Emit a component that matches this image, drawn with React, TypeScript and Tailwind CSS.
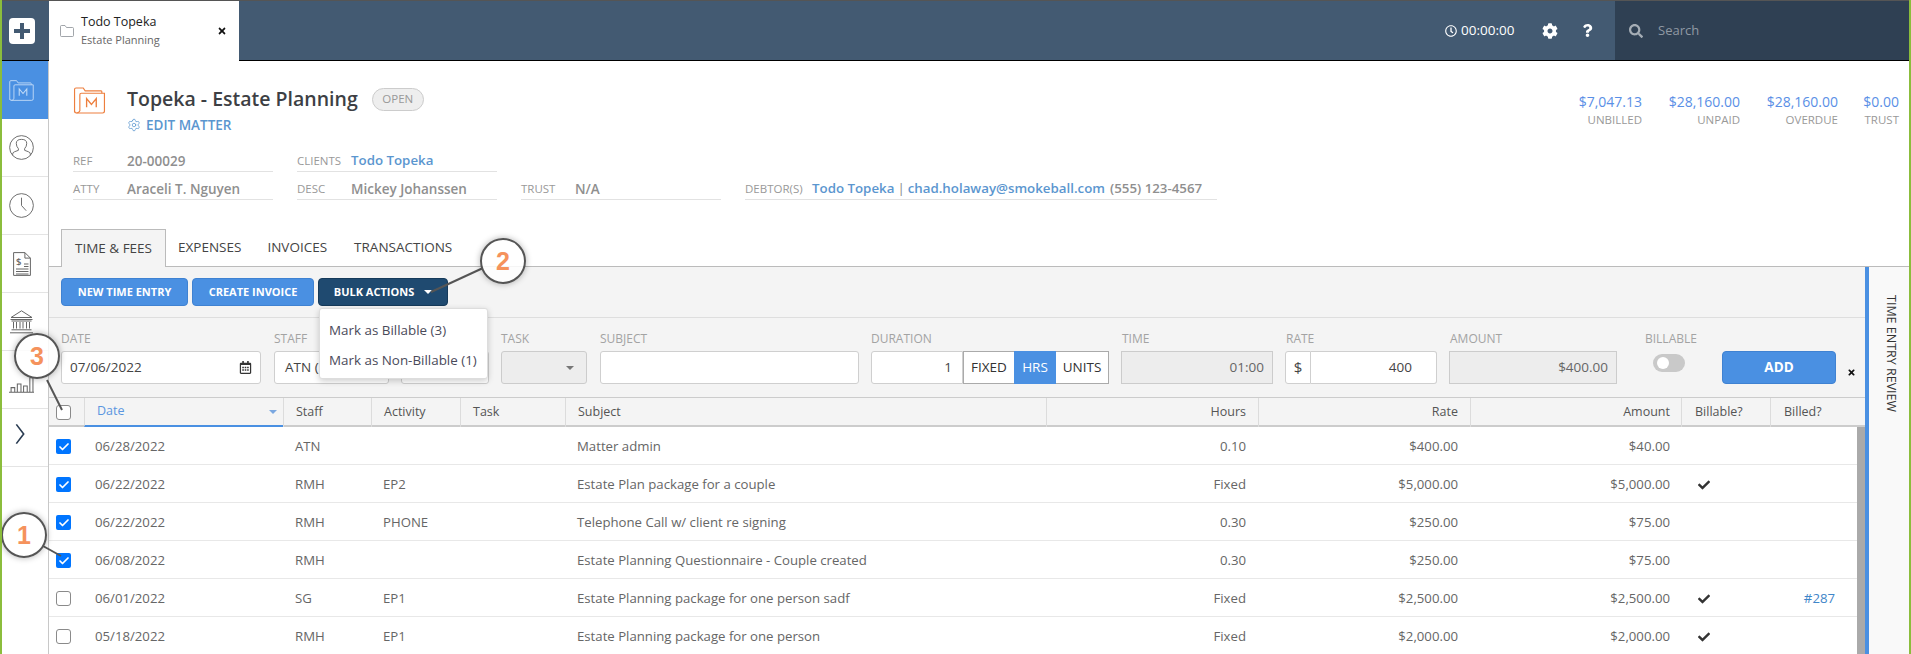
import { Check, Settings } from "lucide-react";
import { FaCog, FaQuestion, FaSearch, FaCheck, FaRegClock, FaTimes, FaRegCalendarAlt } from "react-icons/fa";

const font = "font-['Open_Sans',sans-serif]";

const rows = [
  { on: true, date: "06/28/2022", staff: "ATN", act: "", subject: "Matter admin", hours: "0.10", rate: "$400.00", amount: "$40.00", billable: false, billed: "" },
  { on: true, date: "06/22/2022", staff: "RMH", act: "EP2", subject: "Estate Plan package for a couple", hours: "Fixed", rate: "$5,000.00", amount: "$5,000.00", billable: true, billed: "" },
  { on: true, date: "06/22/2022", staff: "RMH", act: "PHONE", subject: "Telephone Call w/ client re signing", hours: "0.30", rate: "$250.00", amount: "$75.00", billable: false, billed: "" },
  { on: true, date: "06/08/2022", staff: "RMH", act: "", subject: "Estate Planning Questionnaire - Couple created", hours: "0.30", rate: "$250.00", amount: "$75.00", billable: false, billed: "" },
  { on: false, date: "06/01/2022", staff: "SG", act: "EP1", subject: "Estate Planning package for one person sadf", hours: "Fixed", rate: "$2,500.00", amount: "$2,500.00", billable: true, billed: "#287" },
  { on: false, date: "05/18/2022", staff: "RMH", act: "EP1", subject: "Estate Planning package for one person", hours: "Fixed", rate: "$2,000.00", amount: "$2,000.00", billable: true, billed: "" },
];

function MatterIcon({ className }: { className: string }) {
  return (
    <svg viewBox="0 0 33 28" fill="none" stroke="currentColor" strokeWidth="1.2" className={className}>
      <path d="M1 26V2.500Q1 1 2.500 1H10l2 3h16.500q.8 0 .8 1v1.500" />
      <path d="M3 27h27q2 0 2-2V6.500H8q-1.500 0-1.500 1.500v17" />
      <path d="M1 25q0 2 2 2t3.500-2" />
      <path d="M13.500 21v-9l5 6 5-6v9" strokeWidth="1.4" />
    </svg>
  );
}

function SideCell({ active, children }: { active?: boolean; children: React.ReactNode }) {
  return (
    <div className={`h-[58px] flex items-center justify-center pr-[7px] border-b border-[#e4e4e4] ${active ? "bg-[#4a90e2] border-b-0 h-[57px]" : ""}`}>
      {children}
    </div>
  );
}

function Sidebar() {
  return (
    <div className="w-[47px] shrink-0 bg-white border-r border-[#c8c8c8] flex flex-col text-[#666]">
      <SideCell active>
        <MatterIcon className="w-[25px] h-[23px] text-[#c3dcf7]" />
      </SideCell>
      <SideCell>
        <svg viewBox="0 0 24 24" fill="none" stroke="currentColor" strokeWidth="0.9" className="w-[25px] h-[25px]">
          <circle cx="12" cy="12" r="11.400" />
          <path d="M3.500 19.500v-1.200q0-1.600 1.800-2.200l3.700-1.400v-1.600q-2-2-2-5.100 0-3.800 5-3.800t5 3.800q0 3.100-2 5.100v1.600l3.700 1.400q1.800.6 1.800 2.200v1.200" />
        </svg>
      </SideCell>
      <SideCell>
        <svg viewBox="0 0 24 24" fill="none" stroke="currentColor" strokeWidth="0.9" className="w-[25px] h-[25px]">
          <circle cx="12" cy="12" r="11.400" />
          <path d="M12 4.500V12l4.500 5" />
        </svg>
      </SideCell>
      <SideCell>
        <svg viewBox="0 0 18 24" fill="none" stroke="currentColor" strokeWidth="1" className="w-[18px] h-[24px]">
          <path d="M.6 23.400V.6h11.300l5.500 5.500v17.300z" />
          <path d="M11.900.6v5.500h5.500" />
          <path d="M11 12h4.500M11 14.500h4.500M3 17h12.500M3 19.500h12.500M3 22h12.500" />
          <text x="3" y="12.500" fontSize="9.500" fill="currentColor" stroke="none" fontWeight="600">$</text>
        </svg>
      </SideCell>
      <SideCell>
        <svg viewBox="0 0 24 24" fill="none" stroke="currentColor" strokeWidth="1" className="w-[25px] h-[24px]">
          <path d="M1.500 7.500 12 .8l10.500 6.700z" />
          <path d="M1 9.500h22M4 12v6.500M7 12v6.500M10.500 12v6.500M13.500 12v6.500M17 12v6.500M20 12v6.500M2 11h20M2 19.800h20M.5 22.800h23" />
        </svg>
      </SideCell>
      <SideCell>
        <svg viewBox="0 0 24 15" fill="none" stroke="currentColor" strokeWidth="1" className="w-[25px] h-[16px] mt-[10px]">
          <path d="M0 14.500h24M2 14v-4h3.500v4M8 14V6.500h3.500V14M14 14V8.500h3.500V14M20 14V.6h3V14" />
        </svg>
      </SideCell>
      <SideCell>
        <svg viewBox="0 0 10 24" fill="none" stroke="#2a3c52" strokeWidth="1.800" className="w-[10px] h-[22px] -mt-[7px] mr-[3px]">
          <path d="M1 1.500 9 12 1 22.500" />
        </svg>
      </SideCell>
    </div>
  );
}

function Field({ label, value, width, labelW = "w-[54px]", link }: { label: string; value: string; width: string; labelW?: string; link?: boolean }) {
  return (
    <div className={`${width} h-[24px] flex items-center border-b-[1.500px] border-[#e2e2e2] pt-[2px]`}>
      <span className={`${labelW} text-[11.500px] text-[#999]`}>{label}</span>
      <span className={`font-semibold ${link ? "text-[13.300px] text-[#5b96cf]" : "text-[13.500px] text-[#8f8f8f]"}`}>{value}</span>
    </div>
  );
}

function Stat({ value, label, width }: { value: string; label: string; width: string }) {
  return (
    <div className={`${width} text-right`}>
      <div className="text-[14px] leading-[20px] text-[#5a8fe6]">{value}</div>
      <div className="text-[11.500px] leading-[16px] text-[#999]">{label}</div>
    </div>
  );
}

function Label({ text, width }: { text: string; width: string }) {
  return <div className={`${width} text-[12px] text-[#a3a3a3]`}>{text}</div>;
}

const inputBase = "h-[33px] shrink-0 rounded-[3px] border border-[#cfcfcf] bg-white text-[13.500px] text-[#444] flex items-center";
const disabledBase = "h-[33px] shrink-0 border border-[#cccccc] bg-[#ededed] text-[13.500px] text-[#666] flex items-center justify-end pr-[8px]";

function Caret({ color = "#777" }: { color?: string }) {
  return <span className="shrink-0 w-0 h-0 border-x-[4px] border-x-transparent border-t-[4px]" style={{ borderTopColor: color }} />;
}

function FormRow() {
  return (
    <div className="h-[80px] shrink-0 pl-[12px] border-t border-[#dedede]">
      <div className="flex h-[33px] items-end pb-[3px]">
        <Label text="DATE" width="w-[213px]" />
        <Label text="STAFF" width="w-[227px]" />
        <Label text="TASK" width="w-[99px]" />
        <Label text="SUBJECT" width="w-[271px]" />
        <Label text="DURATION" width="w-[251px]" />
        <Label text="TIME" width="w-[164px]" />
        <Label text="RATE" width="w-[164px]" />
        <Label text="AMOUNT" width="w-[195px]" />
        <Label text="BILLABLE" width="w-[70px]" />
      </div>
      <div className="flex items-center">
        <div className={`${inputBase} w-[200px] px-[8px] justify-between mr-[13px]`}>
          <span>07/06/2022</span>
          <FaRegCalendarAlt className="text-[13px] text-[#333]" />
        </div>
        <div className={`${inputBase} w-[115px] px-[10px] mr-[12px]`}>ATN (</div>
        <div className={`${inputBase} w-[88px] mr-[12px]`} />
        <div className={`${disabledBase} w-[86px] rounded-[3px] pr-[12px] mr-[13px]`}>
          <Caret />
        </div>
        <div className={`${inputBase} w-[259px] mr-[12px]`} />
        <div className={`${inputBase} w-[92px] justify-end pr-[10px] rounded-r-none`}>1</div>
        <div className="h-[33px] w-[51px] shrink-0 border border-[#aaa] border-r-0 bg-white flex items-center justify-center text-[13.500px] text-[#333]">FIXED</div>
        <div className="h-[33px] w-[42px] shrink-0 bg-[#4a90e2] flex items-center justify-center text-[13.500px] text-white">HRS</div>
        <div className="h-[33px] w-[53px] shrink-0 border border-[#aaa] border-l-0 bg-white flex items-center justify-center text-[13.500px] text-[#333] mr-[12px]">UNITS</div>
        <div className={`${disabledBase} w-[152px] mr-[12px]`}>01:00</div>
        <div className={`${inputBase} w-[26px] justify-center rounded-r-none text-[15px]`}>$</div>
        <div className={`${inputBase} w-[126px] border-l-0 rounded-l-none justify-end pr-[24px] mr-[12px]`}>400</div>
        <div className={`${disabledBase} w-[168px] mr-[36px]`}>$400.00</div>
        <div className="w-[32px] h-[18px] shrink-0 rounded-full bg-[#c9c9c9] mr-[37px] -mt-[9px] flex items-center pl-[4px]">
          <span className="w-[12px] h-[12px] rounded-full bg-white" />
        </div>
        <button className="w-[114px] h-[33px] shrink-0 rounded-[4px] bg-[#4a90e2] border border-[#3f82d2] text-white text-[13.500px] font-bold">ADD</button>
        <FaTimes className="ml-[11px] mt-[9px] text-[9px] text-[#111] shrink-0" />
      </div>
    </div>
  );
}

const cols = "grid grid-cols-[35px_199px_88px_89px_105px_481px_212px_212px_211px_89px_87px]";

function Box({ on }: { on: boolean }) {
  if (on) {
    return (
      <span className="w-[15px] h-[15px] rounded-[2px] bg-[#0075ff] flex items-center justify-center">
        <Check className="w-[12px] h-[12px] text-white" strokeWidth={3.500} />
      </span>
    );
  }
  return <span className="w-[15px] h-[15px] rounded-[3px] border border-[#8a8a8a] bg-white" />;
}

function Table() {
  const head = "border-l border-[#dcdcdc] flex items-center text-[12.500px] text-[#555]";
  return (
    <div className="flex-1 min-h-0 flex flex-col">
      <div className={`${cols} pr-[8px] h-[30px] shrink-0 border-t border-b-[2px] border-[#cccccc] bg-[#f4f4f4]`}>
        <div className="flex items-center pl-[7px]"><Box on={false} /></div>
        <div className="border-l border-[#dcdcdc] border-b-[2px] border-b-[#4a90e2] h-[29px] flex items-center justify-between pl-[12px] pr-[6px] text-[12.500px] text-[#5b96e0]">
          Date
          <Caret color="#7aa7e0" />
        </div>
        <div className={`${head} pl-[12px]`}>Staff</div>
        <div className={`${head} pl-[12px]`}>Activity</div>
        <div className={`${head} pl-[12px]`}>Task</div>
        <div className={`${head} pl-[12px]`}>Subject</div>
        <div className={`${head} justify-end pr-[12px]`}>Hours</div>
        <div className={`${head} justify-end pr-[12px]`}>Rate</div>
        <div className={`${head} justify-end pr-[11px]`}>Amount</div>
        <div className={`${head} pl-[13px]`}>Billable?</div>
        <div className={`${head} pl-[13px]`}>Billed?</div>
      </div>
      <div className="flex-1 min-h-0 flex">
        <div className="flex-1 bg-white">
          {rows.map((r) => (
            <div key={r.date + r.subject} className={`${cols} h-[38px] pt-[2px] items-center border-b border-[#e8e8e8] text-[13.200px] text-[#666]`}>
              <div className="pl-[7px] flex"><Box on={r.on} /></div>
              <div className="pl-[11px]">{r.date}</div>
              <div className="pl-[12px]">{r.staff}</div>
              <div className="pl-[12px]">{r.act}</div>
              <div />
              <div className="pl-[12px]">{r.subject}</div>
              <div className="text-right pr-[12px]">{r.hours}</div>
              <div className="text-right pr-[12px]">{r.rate}</div>
              <div className="text-right pr-[11px]">{r.amount}</div>
              <div className="pl-[17px]">{r.billable && <FaCheck className="text-[12px] text-[#333]" />}</div>
              <div className="text-right pr-[22px] text-[#3f86c9]">{r.billed}</div>
            </div>
          ))}
        </div>
        <div className="w-[8px] bg-[#aaaaaa]" />
      </div>
    </div>
  );
}

function Annotation({ n, className, line }: { n: number; className: string; line: [number, number, number, number] }) {
  return (
    <>
      <svg className="absolute left-0 top-0 w-[1911px] h-[654px] pointer-events-none" viewBox="0 0 1911 654">
        <line x1={line[0]} y1={line[1]} x2={line[2]} y2={line[3]} stroke="#555" strokeWidth="2" />
      </svg>
      <div className={`absolute w-[46px] h-[46px] rounded-full border-2 border-[#555] bg-white/85 shadow-[0_0_6px_rgba(0,0,0,0.3)] flex items-center justify-center text-[25px] leading-none font-bold text-[#f5925c] font-['Liberation_Sans',sans-serif] ${className}`}>
        {n}
      </div>
    </>
  );
}

export default function App() {
  return (
    <div className={`relative w-[1911px] h-[654px] overflow-hidden bg-white flex flex-col border-l-2 border-r-2 border-r-[#8bbd3c] border-l-[#8bbd3c] ${font}`}>
      {/* top bar */}
      <div className="h-[61px] shrink-0 flex bg-[#435a72] border-t border-t-[#555] border-b border-b-black relative z-10">
        <div className="w-[47px] shrink-0 flex items-center pl-[7px]">
          <div className="w-[26px] h-[26px] rounded-[4px] bg-white flex items-center justify-center">
            <svg viewBox="0 0 18 18" className="w-[18px] h-[18px]" fill="#435a72">
              <path d="M7 1h4v6h6v4h-6v6H7v-6H1V7h6z" />
            </svg>
          </div>
        </div>
        <div className="w-[190px] h-[60px] shrink-0 bg-white flex items-center pl-[11px]">
          <svg viewBox="0 0 14 12" className="w-[14px] h-[12px] text-[#8a8f96]" fill="none" stroke="currentColor" strokeWidth="0.8">
            <path d="M.5 10.500V1.500q0-1 1-1h3.500l1.500 2h6q1 0 1 1v7q0 1-1 1h-11q-1 0-1-1z" />
          </svg>
          <div className="ml-[7px] w-[136px]">
            <div className="text-[12.500px] leading-[18px] text-[#222]">Todo Topeka</div>
            <div className="text-[11px] leading-[18px] text-[#666]">Estate Planning</div>
          </div>
          <FaTimes className="text-[10px] text-[#111]" />
        </div>
        <div className="flex-1 flex items-center justify-end text-white">
          <FaRegClock className="text-[12px]" />
          <span className="ml-[4px] text-[13.500px] w-[81px]">00:00:00</span>
          <FaCog className="text-[16px]" />
          <FaQuestion className="text-[13px] ml-[23px]" />
          <div className="w-[294px] h-full bg-[#2f4053] ml-[21px] flex items-center pl-[14px]">
            <FaSearch className="text-[14px] text-[#a5adb5]" />
            <span className="ml-[15px] text-[13px] text-[#8f99a3]">Search</span>
          </div>
        </div>
      </div>

      <div className="flex-1 min-h-0 flex">
        <Sidebar />
        <div className="flex-1 min-w-0 flex flex-col">
          {/* matter header */}
          <div className="h-[168px] shrink-0 pl-[24px] pt-[26px]">
            <div className="flex justify-between pr-[10px]">
              <div className="flex">
                <MatterIcon className="w-[33px] h-[27px] text-[#ed7f3e] mr-[21px]" />
                <div>
                  <div className="flex items-center h-[24px]">
                    <span className="text-[19.500px] font-semibold text-[#3d3f44]">Topeka - Estate Planning</span>
                    <span className="ml-[14px] w-[52px] h-[23px] rounded-full bg-[#eee] border border-[#ccc] flex items-center justify-center text-[11.500px] text-[#999]">OPEN</span>
                  </div>
                  <div className="flex items-center mt-[4px] text-[#5b96cf] font-semibold text-[13.500px]">
                    <Settings className="w-[14px] h-[14px] mr-[5px]" strokeWidth={1.300} />
                    EDIT MATTER
                  </div>
                </div>
              </div>
              <div className="flex mt-[5px]">
                <Stat value="$7,047.13" label="UNBILLED" width="w-[90px]" />
                <Stat value="$28,160.00" label="UNPAID" width="w-[98px]" />
                <Stat value="$28,160.00" label="OVERDUE" width="w-[98px]" />
                <Stat value="$0.00" label="TRUST" width="w-[61px]" />
              </div>
            </div>
            <div className="mt-[13px] flex gap-[24px]">
              <Field label="REF" value="20-00029" width="w-[200px]" />
              <Field label="CLIENTS" value="Todo Topeka" width="w-[200px]" link />
            </div>
            <div className="mt-[4px] flex gap-[24px]">
              <Field label="ATTY" value="Araceli T. Nguyen" width="w-[200px]" />
              <Field label="DESC" value="Mickey Johanssen" width="w-[200px]" />
              <Field label="TRUST" value="N/A" width="w-[200px]" />
              <div className="w-[472px] h-[24px] flex items-center border-b-[1.500px] border-[#e2e2e2] pt-[2px] font-semibold text-[13.300px]">
                <span className="w-[67px] text-[11.500px] font-normal text-[#999]">DEBTOR(S)</span>
                <span className="text-[#5b96cf]">Todo Topeka</span>
                <span className="text-[#888] font-normal mx-[3px]">|</span>
                <span className="text-[#5b96cf]">chad.holaway@smokeball.com</span>
                <span className="text-[#8f8f8f] ml-[5px]">(555) 123-4567</span>
              </div>
            </div>
          </div>

          {/* tabs */}
          <div className="h-[38px] shrink-0 flex pl-[12px] border-b border-[#bbb] text-[13.500px] text-[#444]">
            <div className="w-[105px] h-[38px] bg-[#f4f4f4] border border-[#bbb] border-b-0 flex items-center justify-center">TIME &amp; FEES</div>
            <div className="pl-[12px] flex items-center">EXPENSES</div>
            <div className="pl-[26px] flex items-center">INVOICES</div>
            <div className="pl-[27px] flex items-center">TRANSACTIONS</div>
          </div>

          <div className="flex-1 min-h-0 flex">
            <div className="w-[1816px] shrink-0 bg-[#f4f4f4] flex flex-col">
              <div className="h-[50px] shrink-0 px-[12px] flex items-center gap-[4px] text-[11px] font-bold text-white">
                <button className="w-[127px] h-[28px] rounded-[4px] bg-[#4a90e2] border border-[#3f82d2]">NEW TIME ENTRY</button>
                <button className="w-[122px] h-[28px] rounded-[4px] bg-[#4a90e2] border border-[#3f82d2]">CREATE INVOICE</button>
                <button className="w-[130px] h-[28px] rounded-[4px] bg-[#1f4a70] border border-[#163a5a] flex items-center justify-center gap-[10px]">
                  BULK ACTIONS
                  <Caret color="#ffffff" />
                </button>
              </div>
              <FormRow />
              <Table />
            </div>
            <div className="flex-1 border-l-4 border-[#4a90e2] bg-[#f9f9f9] flex justify-center pt-[28px] pl-[4px]">
              <span className="[writing-mode:vertical-rl] text-[12.500px] text-[#333] h-fit">TIME ENTRY REVIEW</span>
            </div>
          </div>
        </div>
      </div>

      {/* bulk actions menu */}
      <div className="absolute left-[317px] top-[308px] w-[169px] h-[71px] z-20 rounded-[3px] bg-white border border-[#ddd] shadow-[0_2px_6px_rgba(0,0,0,0.2)] pl-[9px] pt-[6px] text-[13.400px] text-[#4a4a5a]">
        <div className="h-[30px] flex items-center">Mark as Billable (3)</div>
        <div className="h-[30px] flex items-center">Mark as Non-Billable (1)</div>
      </div>

      {/* tutorial callouts */}
      <div className="absolute -left-[2px] top-0 z-30">
        <Annotation n={2} className="left-[480px] top-[238px]" line={[483, 268, 431, 292]} />
        <Annotation n={3} className="left-[14px] top-[333px]" line={[47, 380, 62, 410]} />
        <Annotation n={1} className="left-[1px] top-[512px]" line={[43, 546, 61, 556]} />
      </div>
    </div>
  );
}
